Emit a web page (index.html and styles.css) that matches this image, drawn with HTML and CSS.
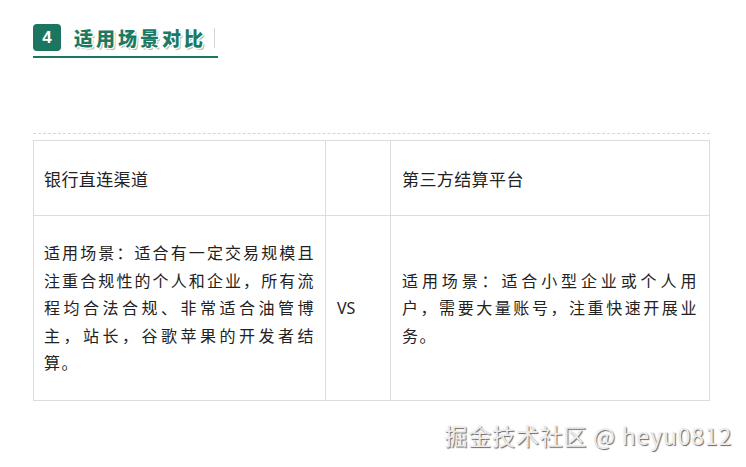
FILE: index.html
```html
<!DOCTYPE html>
<html lang="zh">
<head>
<meta charset="utf-8">
<link rel="stylesheet" href="styles.css">
</head>
<body>
<div class="page">
  <div class="section-head">
    <div class="head-inner">
      <span class="badge">4</span>
      <span class="title">适用场景对比</span>
      <span class="divider"></span>
    </div>
  </div>
  <div class="table-wrap">
    <table class="cmp">
      <tr class="head-row">
        <td class="c1">银行直连渠道</td>
        <td class="c2"></td>
        <td class="c3">第三方结算平台</td>
      </tr>
      <tr class="body-row">
        <td class="c1"><p class="txt">适用场景：适合有一定交易规模且注重合规性的个人和企业，所有流程均合法合规、非常适合油管博主，站长，谷歌苹果的开发者结算。</p></td>
        <td class="c2 vs">VS</td>
        <td class="c3"><p class="txt">适用场景：适合小型企业或个人用户，需要大量账号，注重快速开展业务。</p></td>
      </tr>
    </table>
  </div>
  <div class="watermark">掘金技术社区 @ heyu0812</div>
</div>
</body>
</html>
```

FILE: styles.css
```css
* { box-sizing: border-box; }
html, body {
  margin: 0;
  padding: 0;
  background: #ffffff;
}
body {
  font-family: "Noto Sans CJK SC", "Noto Sans", sans-serif;
  color: #222;
  width: 746px;
  height: 467px;
  overflow: hidden;
}
.page {
  position: relative;
  width: 746px;
  height: 467px;
  padding: 24px 0 0 33px;
}
.section-head {
  width: 185px;
  border-bottom: 2px solid #1b7560;
  padding-bottom: 5px;
}
.head-inner {
  display: flex;
  align-items: center;
  height: 27px;
}
.badge {
  width: 28px;
  height: 27px;
  border-radius: 4px;
  background: #1b7560;
  color: #fff;
  font-family: "Liberation Sans", "Noto Sans", sans-serif;
  font-weight: bold;
  font-size: 17px;
  display: flex;
  align-items: center;
  justify-content: center;
}
.title {
  margin-left: 13px;
  font-family: "Noto Sans CJK SC", sans-serif;
  font-weight: 900;
  font-size: 19px;
  letter-spacing: 3px;
  color: #1d7a62;
  line-height: 27px;
  text-shadow:
    1px 0 0 #fff, -1px 0 0 #fff, 0 1px 0 #fff, 0 -1px 0 #fff,
    1px 1px 0 #fff, -1px -1px 0 #fff, 1px -1px 0 #fff, -1px 1px 0 #fff,
    2px 2px 1px #9fb9b0;
}
.divider {
  margin-left: 8px;
  width: 1px;
  height: 20px;
  background: #cfd6d3;
}
.table-wrap {
  margin-top: 75px;
  width: 677px;
  border-top: 1px dashed #d6d6d6;
  padding-top: 6px;
}
.cmp {
  border-collapse: collapse;
  width: 677px;
  table-layout: fixed;
}
.cmp td {
  border: 1px solid #dcdcdc;
  font-size: 16px;
  vertical-align: middle;
  color: #222;
}
.c1 { width: 292px; padding: 0 10px 0 10px; }
.c2 { width: 65px; padding: 0 11px; }
.c3 { padding: 0 11px 0 11px; }
.head-row td {
  height: 75px;
  font-size: 17px;
  letter-spacing: 0.4px;
}
.body-row td {
  height: 185px;
}
.txt {
  margin: 0;
  line-height: 27.5px;
  letter-spacing: 1.6px;
  text-align: justify;
}
.vs {
  font-family: "Noto Sans", sans-serif;
  font-size: 17px;
}
.watermark {
  position: absolute;
  right: 14px;
  top: 418px;
  font-family: "Noto Sans CJK SC", "Liberation Sans", sans-serif;
  font-size: 23px;
  color: #ececec;
  text-shadow: 1px 1px 1px #666, -1px -1px 0 #fafafa;
  letter-spacing: 0.8px;
}
```
